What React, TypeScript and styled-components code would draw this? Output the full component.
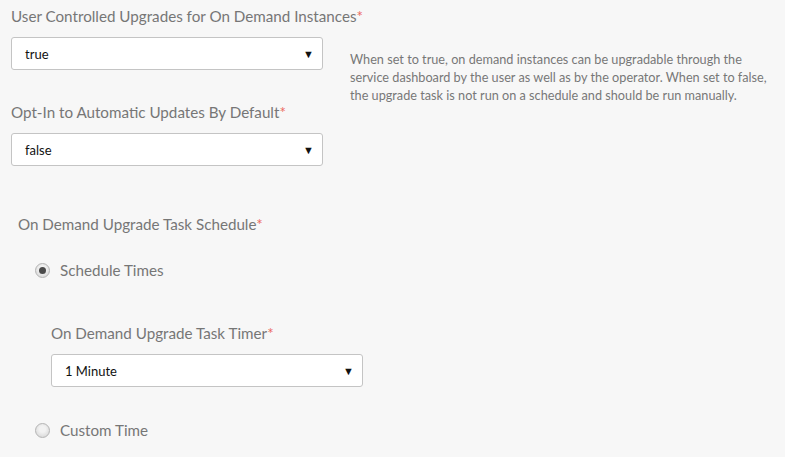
import React from "react";
import styled, { createGlobalStyle } from "styled-components";

const GlobalStyle = createGlobalStyle`
	body {
		margin: 0;
		background: #f7f7f7;
		font-family: "Lato", "Open Sans", sans-serif;
	}
`;

const Page = styled.div`
	padding: 5px 0 0 11px;
`;

const TopRow = styled.div`
	display: flex;
	align-items: flex-start;
`;

const Column = styled.div`
	width: 312px;
	flex-shrink: 0;
`;

const Label = styled.div<{ $gap?: number }>`
	font-size: 15.2px;
	line-height: 22px;
	color: #767676;
	white-space: nowrap;
	margin-bottom: ${(p) => p.$gap ?? 10}px;

	span {
		color: #ec6a5e;
	}
`;

const Field = styled.div<{ $gap?: number }>`
	margin-bottom: ${(p) => p.$gap ?? 0}px;
`;

const SelectBox = styled.div<{ $width?: number }>`
	box-sizing: border-box;
	width: ${(p) => p.$width ?? 312}px;
	height: 33px;
	display: flex;
	align-items: center;
	justify-content: space-between;
	padding: 0 8px 0 13px;
	background: #fff;
	border: 1px solid #c4c4c4;
	border-radius: 3px;
	font-size: 13px;
	color: #111;
`;

const Arrow = styled.span`
	font-size: 11px;
	color: #111;
`;

const Help = styled.p`
	margin: 45px 0 0 27px;
	font-size: 12.7px;
	line-height: 18px;
	color: #777;
	white-space: nowrap;
`;

const Section = styled.div`
	padding: 47px 0 0 7px;
`;

const RadioRow = styled.div`
	display: flex;
	align-items: center;
	gap: 10px;
	padding-left: 17px;
	font-size: 15.2px;
	color: #767676;
	height: 22px;
`;

const Radio = styled.span<{ $checked?: boolean }>`
	box-sizing: border-box;
	width: 15px;
	height: 15px;
	border-radius: 50%;
	border: 1px solid #b4b4b4;
	background: radial-gradient(circle at 50% 40%, #f2f2f2 30%, #d0d0d0);
	display: flex;
	align-items: center;
	justify-content: center;

	&::after {
		content: "";
		width: 7px;
		height: 7px;
		border-radius: 50%;
		background: #4a4a4a;
		display: ${(p) => (p.$checked ? "block" : "none")};
	}
`;

const SubField = styled.div`
	padding: 41px 0 0 33px;
	margin-bottom: 32px;
`;

const Req = () => <span>*</span>;

const App = () => {
	return (
		<Page>
			<GlobalStyle />
			<TopRow>
				<Column>
					<Field $gap={31}>
						<Label>
							User Controlled Upgrades for On Demand Instances<Req />
						</Label>
						<SelectBox>
							true <Arrow>▼</Arrow>
						</SelectBox>
					</Field>
					<Field>
						<Label>
							Opt-In to Automatic Updates By Default<Req />
						</Label>
						<SelectBox>
							false <Arrow>▼</Arrow>
						</SelectBox>
					</Field>
				</Column>
				<Help>
					When set to true, on demand instances can be upgradable through the
					<br />
					service dashboard by the user as well as by the operator. When set to
					false,
					<br />
					the upgrade task is not run on a schedule and should be run manually.
				</Help>
			</TopRow>
			<Section>
				<Label $gap={24}>
					On Demand Upgrade Task Schedule<Req />
				</Label>
				<RadioRow>
					<Radio $checked />
					Schedule Times
				</RadioRow>
				<SubField>
					<Label>
						On Demand Upgrade Task Timer<Req />
					</Label>
					<SelectBox>
						1 Minute <Arrow>▼</Arrow>
					</SelectBox>
				</SubField>
				<RadioRow>
					<Radio />
					Custom Time
				</RadioRow>
			</Section>
		</Page>
	);
};

export default App;
